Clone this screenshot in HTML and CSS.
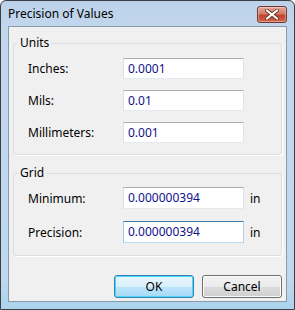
FILE: index.html
```html
<!DOCTYPE html>
<html>
<head>
<meta charset="utf-8">
<link rel="stylesheet" href="styles.css">
</head>
<body>
<div class="window">
  <div class="titlebar">
    <span class="title">Precision of Values</span>
    <span class="close">
      <svg width="14" height="11" viewBox="0 0 14 11">
        <path d="M2 1.5 L12 9.5 M12 1.5 L2 9.5" stroke="#5a2a22" stroke-width="3.6" stroke-linecap="square"/>
        <path d="M2 1.5 L12 9.5 M12 1.5 L2 9.5" stroke="#ffffff" stroke-width="2" stroke-linecap="square"/>
      </svg>
    </span>
  </div>
  <div class="client">
    <fieldset class="group units">
      <legend>Units</legend>
      <div class="rows">
        <label class="lbl">Inches:</label><div class="field">0.0001</div><span></span>
        <label class="lbl">Mils:</label><div class="field">0.01</div><span></span>
        <label class="lbl">Millimeters:</label><div class="field">0.001</div><span></span>
      </div>
    </fieldset>
    <fieldset class="group grid">
      <legend>Grid</legend>
      <div class="rows">
        <label class="lbl">Minimum:</label><div class="field">0.000000394</div><span class="unit">in</span>
        <label class="lbl">Precision:</label><div class="field focus">0.000000394</div><span class="unit">in</span>
      </div>
    </fieldset>
    <div class="buttons">
      <button class="btn default">OK</button>
      <button class="btn">Cancel</button>
    </div>
  </div>
</div>
</body>
</html>
```
FILE: styles.css
```css
* { box-sizing: border-box; }
html, body { margin: 0; padding: 0; }
body {
  width: 295px;
  height: 310px;
  font-family: "Noto Sans", "Open Sans", sans-serif;
  font-size: 12px;
  color: #000;
  background: #fff;
}
.window {
  width: 295px;
  height: 310px;
  border: 1px solid #3a3f46;
  border-radius: 6px 6px 0 0;
  background: linear-gradient(#bcd2ea 0px, #c3d7ed 30px, #bfd8ee 280px, #a9d3ec 310px);
  display: flex;
  flex-direction: column;
}
.titlebar {
  height: 25px;
  display: flex;
  align-items: flex-start;
  justify-content: space-between;
  padding: 0 7px 0 7px;
}
.title {
  margin-top: 5px;
  line-height: 16px;
  color: #000;
}
.close {
  margin-top: 5px;
  width: 30px;
  height: 17px;
  border: 1px solid #6b3a33;
  border-radius: 3px;
  background: linear-gradient(#e8a898 0%, #d47a66 45%, #c2442c 55%, #d4654c 100%);
  box-shadow: inset 0 0 0 1px rgba(255,255,255,0.35);
  display: flex;
  align-items: center;
  justify-content: center;
}
.client {
  flex: 1;
  margin: 0 7px 7px 7px;
  border: 1px solid #8a99aa;
  background: #f0f0f0;
  padding: 9px 4px 0 4px;
  display: flex;
  flex-direction: column;
}
.group {
  margin: 0;
  padding: 0;
  border: 1px solid #d5dfe5;
  border-radius: 3px;
  box-shadow: 1px 1px 0 #ffffff;
  min-inline-size: 0;
}
.group legend {
  margin-left: 4px;
  padding: 0 2px;
  line-height: 14px;
}
.grid { margin-top: 11px; }
.rows {
  display: grid;
  grid-template-columns: 95px 121px auto;
  row-gap: 11px;
  align-items: center;
  padding: 0 0 0 14px;
}
.units .rows { padding-top: 8px; padding-bottom: 11px; }
.grid .rows { padding-top: 7px; padding-bottom: 12px; row-gap: 12px; }
.lbl { color: #000; }
.field {
  height: 21px;
  line-height: 19px;
  padding: 0 4px;
  background: #fff;
  border: 1px solid;
  border-color: #abadb3 #e2e3ea #e3e9ef #dbdfe6;
  color: #10108a;
}
.grid .field { height: 22px; line-height: 20px; }
.field.focus { border-color: #3d7bad #b5cfe7 #b7d9ed #a4c9e3; }
.unit { padding-left: 6px; color: #000; }
.buttons {
  margin-top: 19px;
  display: flex;
  justify-content: flex-end;
  gap: 8px;
}
.btn {
  width: 80px;
  height: 23px;
  font-family: inherit;
  font-size: 12px;
  color: #000;
  border: 1px solid #707070;
  border-radius: 3px;
  background: linear-gradient(#f2f2f2 0%, #ebebeb 50%, #dddddd 50%, #cfcfcf 100%);
  box-shadow: inset 0 0 0 1px #fcfcfc;
  padding: 0;
}
.btn.default {
  border-color: #3c7fb1;
  background: linear-gradient(#eaf6fd 0%, #d9f0fc 50%, #bee6fd 50%, #a7d9f5 100%);
  box-shadow: inset 0 0 0 1px #48d8fb;
}
```
